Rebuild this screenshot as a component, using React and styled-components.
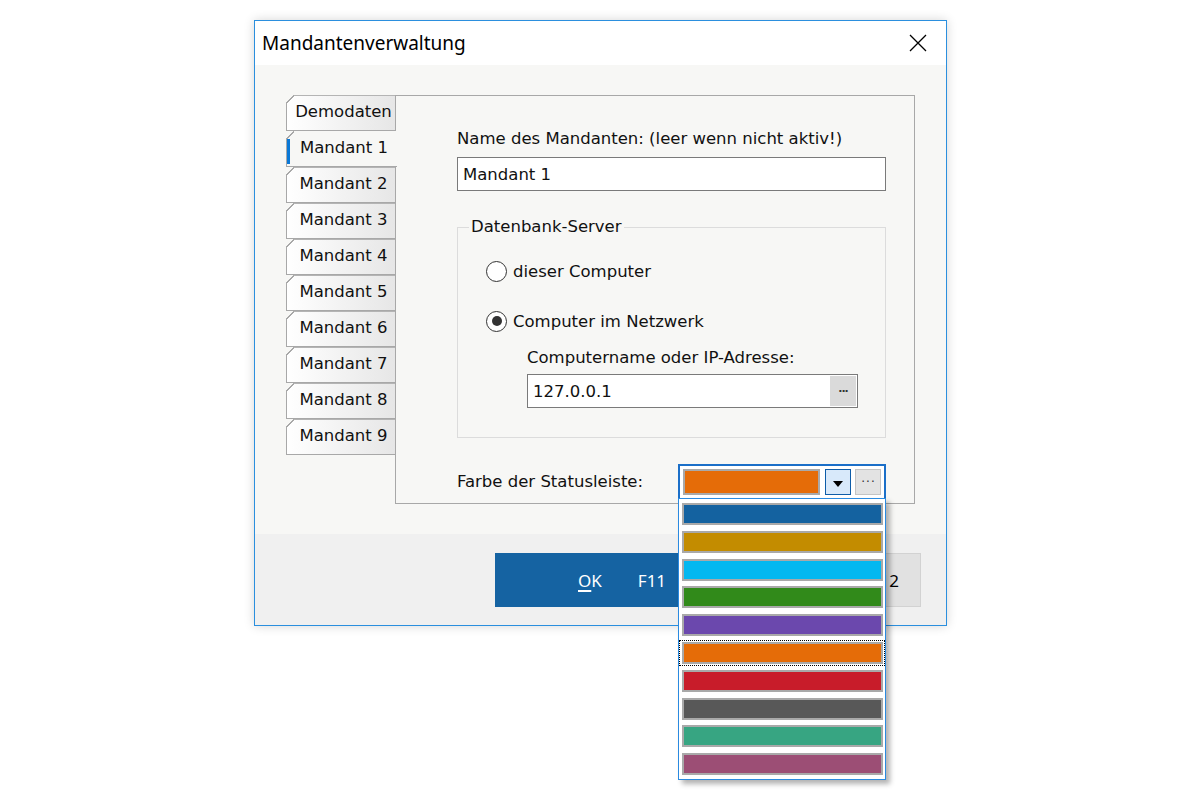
import React from 'react';
import styled, { createGlobalStyle } from 'styled-components';

const GlobalStyle = createGlobalStyle`
    html, body {
        margin: 0;
        padding: 0;
        background: #fff;
    }
    body {
        font-family: "DejaVu Sans", "Liberation Sans", sans-serif;
        color: #111;
    }
`;

const Page = styled.div`
    width: 1200px;
    height: 800px;
    box-sizing: border-box;
    padding: 20px 0 0 254px;
`;

const Window = styled.div`
    width: 693px;
    height: 606px;
    box-sizing: border-box;
    border: 1px solid #2b8fde;
    background: #f7f7f5;
    box-shadow: 0 0 10px rgba(0, 0, 0, 0.16);
    display: flex;
    flex-direction: column;
`;

const TitleBar = styled.div`
    height: 44px;
    flex: none;
    background: #fff;
    display: flex;
    align-items: center;
    justify-content: space-between;
    padding: 0 19px 0 7px;
    font-family: "Noto Sans", sans-serif;
    font-size: 19px;
    color: #000;
`;

const Body = styled.div`
    flex: 1;
    display: flex;
    align-items: flex-start;
    padding: 30px 0 0 31px;
`;

const TabColumn = styled.div`
    width: 110px;
    display: flex;
    flex-direction: column;
`;

const Tab = styled.div`
    position: relative;
    height: 36px;
    box-sizing: border-box;
    display: flex;
    align-items: center;
    justify-content: center;
    padding: 0 0 3px 4px;
    font-size: 16.5px;
    white-space: nowrap;
    border: 1px solid #a8a8a8;
    border-right: none;
    background: ${p => (p.$active ? '#f7f7f5' : 'linear-gradient(to right, #ffffff, #e6e6e6)')};
    width: ${p => (p.$active ? '111px' : '110px')};
    z-index: ${p => (p.$active ? 2 : 1)};
    border-top-color: ${p => (p.$active ? 'transparent' : '#b4b4b4')};
    &::before {
        content: '';
        position: absolute;
        top: -1px;
        left: -1px;
        width: 8px;
        height: 8px;
        background: linear-gradient(135deg, #f7f7f5 48%, #a8a8a8 48%, #a8a8a8 60%, transparent 60%);
    }
    &::after {
        content: '';
        display: ${p => (p.$active ? 'block' : 'none')};
        position: absolute;
        left: 0;
        top: 7px;
        width: 3px;
        height: 25px;
        background: #0a78d6;
    }
`;

const Panel = styled.div`
    width: 520px;
    height: 409px;
    box-sizing: border-box;
    border: 1px solid #a8a8a8;
    background: #f7f7f5;
    padding: 33px 28px 0 61px;
    margin-left: -1px;
    position: relative;
    z-index: 1;
`;

const Label = styled.div`
    font-size: 16.5px;
    line-height: 20px;
    white-space: nowrap;
`;

const TextBox = styled.div`
    height: 34px;
    box-sizing: border-box;
    margin-top: ${p => p.$mt || 0}px;
    width: ${p => p.$w || '100%'};
    border: 1px solid #7a7a7a;
    background: #fff;
    display: flex;
    align-items: center;
    justify-content: space-between;
    padding: 0 1px 0 5px;
    font-size: 16.5px;
`;

const DotsButton = styled.div`
    width: 26px;
    height: 30px;
    background: #dadada;
    display: flex;
    align-items: center;
    justify-content: center;
    font-size: 11px;
    font-weight: bold;
    letter-spacing: -1px;
    color: #333;
`;

const Group = styled.fieldset`
    margin: 26px 0 0 0;
    padding: 0 0 29px 28px;
    border: 1px solid #dcdcdc;
    min-width: 0;
`;

const Legend = styled.legend`
    margin-left: -17px;
    padding: 0 2px;
    font-size: 16.5px;
    line-height: 20px;
`;

const RadioRow = styled.label`
    display: flex;
    align-items: center;
    gap: 6px;
    height: 24px;
    margin-top: ${p => p.$mt}px;
    font-size: 16.5px;
`;

const RadioCircle = styled.span`
    width: 21px;
    height: 21px;
    box-sizing: border-box;
    border-radius: 50%;
    border: 1.5px solid #333;
    background: #fff;
    display: flex;
    align-items: center;
    justify-content: center;
    &::after {
        content: '';
        width: 10px;
        height: 10px;
        border-radius: 50%;
        background: #333;
        display: ${p => (p.$checked ? 'block' : 'none')};
    }
`;

const SubBlock = styled.div`
    margin: 15px 0 0 41px;
`;

const ColorRow = styled.div`
    margin-top: 26px;
    height: 36px;
    display: flex;
    align-items: center;
    justify-content: space-between;
`;

const Combo = styled.div`
    position: relative;
    width: 208px;
    height: 36px;
    box-sizing: border-box;
    border: 2px solid #1b6fc8;
    background: #fff;
    padding: 3px;
    display: flex;
    gap: 4px;
`;

const Swatch = styled.div`
    flex: ${p => (p.$grow ? 1 : 'none')};
    height: 100%;
    box-sizing: border-box;
    border: 2px solid #a9a9a9;
    background: ${p => p.$color};
    margin-right: ${p => (p.$grow ? 1 : 0)}px;
`;

const ArrowButton = styled.div`
    width: 26px;
    box-sizing: border-box;
    border: 1px solid #0d5ca8;
    background: #d8e9fa;
    display: flex;
    align-items: center;
    justify-content: center;
    &::after {
        content: '';
        border-left: 5px solid transparent;
        border-right: 5px solid transparent;
        border-top: 6px solid #000;
        margin-top: 3px;
    }
`;

const SmallDots = styled.div`
    width: 26px;
    box-sizing: border-box;
    border: 1px solid #c4c4c4;
    background: #e3e3e3;
    display: flex;
    align-items: center;
    justify-content: center;
    font-size: 12px;
    color: #333;
    letter-spacing: 1px;
    padding-left: 1px;
`;

const DropList = styled.div`
    position: absolute;
    top: 100%;
    left: -2px;
    width: 208px;
    box-sizing: border-box;
    border: 1px solid #2a8ae0;
    background: #fff;
    padding-top: 2px;
    box-shadow: 4px 4px 5px rgba(0, 0, 0, 0.3);
    z-index: 10;
`;

const DropItem = styled.div`
    height: 26px;
    box-sizing: border-box;
    padding: 1px 1px 1px 2px;
    margin-bottom: 1.8px;
    border: 1px dotted ${p => (p.$focus ? '#000' : 'transparent')};
`;

const Footer = styled.div`
    height: 91px;
    flex: none;
    background: #f0f0f0;
    box-sizing: border-box;
    padding: 19px 24px 0 240px;
    display: flex;
    gap: 10px;
`;

const Button = styled.div`
    width: 208px;
    height: 54px;
    box-sizing: border-box;
    display: flex;
    align-items: center;
    gap: 36px;
    font-family: "Noto Sans", sans-serif;
    font-size: 17px;
    justify-content: ${p => (p.$primary ? 'flex-start' : 'flex-end')};
    padding: ${p => (p.$primary ? '0 0 0 82px' : '0 21px 0 0')};
    background: ${p => (p.$primary ? '#1563a2' : '#e1e1e1')};
    color: ${p => (p.$primary ? '#fff' : '#000')};
    border: 1px solid ${p => (p.$primary ? '#1563a2' : '#d2d2d2')};
    u {
        text-decoration-thickness: 2px;
        text-underline-offset: 3px;
    }
`;

const colors = [
    '#1462a0',
    '#c38c00',
    '#03b8f0',
    '#318a1a',
    '#6b48ad',
    '#e56c08',
    '#c81c2a',
    '#585858',
    '#37a582',
    '#9c4e75',
];

const tabs = ['Demodaten', 'Mandant 1', 'Mandant 2', 'Mandant 3', 'Mandant 4', 'Mandant 5', 'Mandant 6', 'Mandant 7', 'Mandant 8', 'Mandant 9'];

export default function App() {
    return (
        <Page>
            <GlobalStyle />
            <Window>
                <TitleBar>
                    <span>Mandantenverwaltung</span>
                    <svg width="18" height="18" viewBox="0 0 18 18">
                        <path d="M1 1 L17 17 M17 1 L1 17" stroke="#000" strokeWidth="1.3" />
                    </svg>
                </TitleBar>
                <Body>
                    <TabColumn>
                        {tabs.map((t, i) => (
                            <Tab key={t} $active={i === 1}>{t}</Tab>
                        ))}
                    </TabColumn>
                    <Panel>
                        <Label>Name des Mandanten: (leer wenn nicht aktiv!)</Label>
                        <TextBox $mt={8}>Mandant 1</TextBox>
                        <Group>
                            <Legend>Datenbank-Server</Legend>
                            <RadioRow $mt={22}>
                                <RadioCircle />
                                dieser Computer
                            </RadioRow>
                            <RadioRow $mt={26}>
                                <RadioCircle $checked />
                                Computer im Netzwerk
                            </RadioRow>
                            <SubBlock>
                                <Label>Computername oder IP-Adresse:</Label>
                                <TextBox $mt={6} $w="331px">
                                    127.0.0.1
                                    <DotsButton>···</DotsButton>
                                </TextBox>
                            </SubBlock>
                        </Group>
                        <ColorRow>
                            <Label>Farbe der Statusleiste:</Label>
                            <Combo>
                                <Swatch $grow $color="#e56c08" />
                                <ArrowButton />
                                <SmallDots>···</SmallDots>
                                <DropList>
                                    {colors.map((c, i) => (
                                        <DropItem key={c} $focus={i === 5}>
                                            <Swatch $color={c} />
                                        </DropItem>
                                    ))}
                                </DropList>
                            </Combo>
                        </ColorRow>
                    </Panel>
                </Body>
                <Footer>
                    <Button $primary>
                        <span><u>O</u>K</span>
                        <span>F11</span>
                    </Button>
                    <Button>
                        <span>Abbrechen</span>
                        <span>F12</span>
                    </Button>
                </Footer>
            </Window>
        </Page>
    );
}
